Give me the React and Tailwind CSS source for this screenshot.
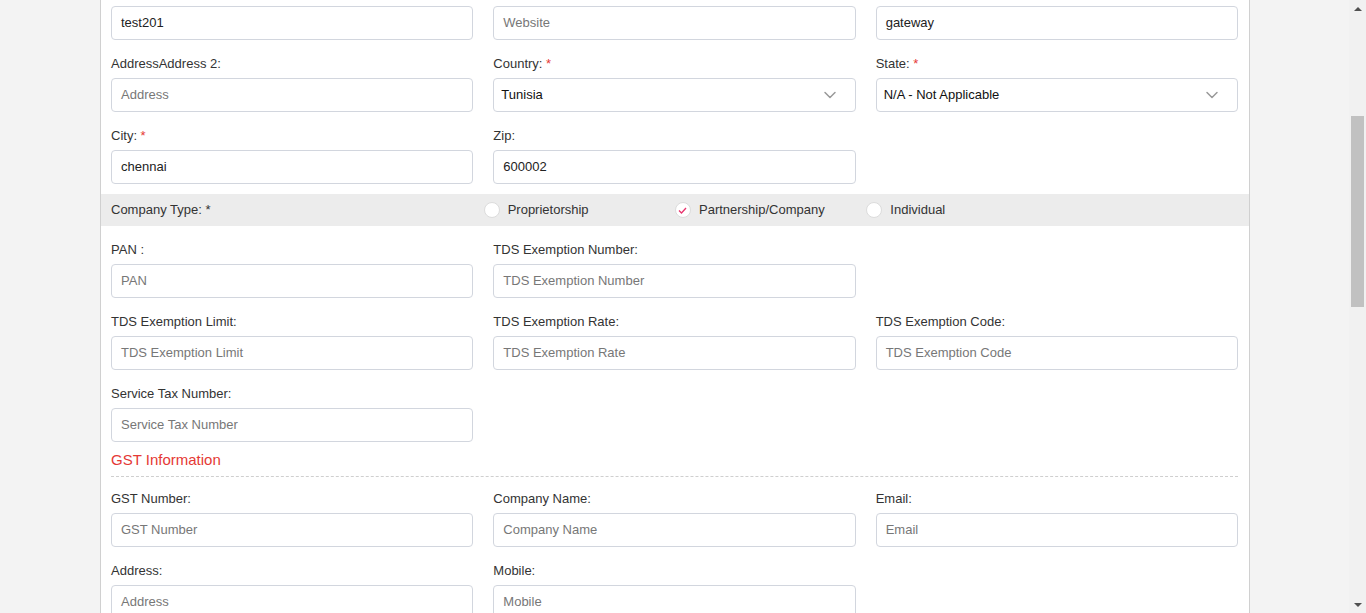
import { ChevronDown } from "lucide-react";

function Label({ text, required }) {
    return (
        <div className="h-5 leading-5 mt-px mb-1 text-[13px] text-[#333]">
            {text}
            {required && <span className="text-[#e53935]"> *</span>}
        </div>
    );
}

function Input({ value, placeholder }) {
    return (
        <div className="h-[34px] border border-[#d2d6de] rounded-[4px] bg-white px-[9px] flex items-center text-[13px]">
            {value ? (
                <span className="text-[#222]">{value}</span>
            ) : (
                <span className="text-[#777]">{placeholder}</span>
            )}
        </div>
    );
}

function Select({ value }) {
    return (
        <div className="h-[34px] border border-[#d2d6de] rounded-[4px] bg-white pl-[7px] pr-[15px] flex items-center justify-between text-[13px]">
            <span className="text-[#111]">{value}</span>
            <ChevronDown size={20} strokeWidth={1.8} className="text-[#999]" />
        </div>
    );
}

function Field({ label, required, value, placeholder, select }) {
    return (
        <div className="mb-[13px]">
            {label && <Label text={label} required={required} />}
            {select ? <Select value={value} /> : <Input value={value} placeholder={placeholder} />}
        </div>
    );
}

function Radio({ label, checked }) {
    return (
        <div className="flex items-center gap-2 text-[13px] text-[#333]">
            <span className="w-4 h-4 rounded-full bg-white border border-[#dcdcdc] flex items-center justify-center">
                {checked && (
                    <svg width="9" height="7" viewBox="0 0 9 7" fill="none">
                        <path d="M1 3.5 L3.5 6 L8 1" stroke="#e8336d" strokeWidth="1.3" />
                    </svg>
                )}
            </span>
            <span>{label}</span>
        </div>
    );
}

export default function App() {
    return (
        <div className="h-[613px] overflow-hidden flex bg-[#f3f3f3]" style={{ fontFamily: '"Liberation Sans", Arial, sans-serif' }}>
            <div className="w-[100px] shrink-0" />

            {/* Form panel */}
            <div className="w-[1150px] shrink-0 bg-white border-x border-[#d0d0d0]">
                <div className="pl-[10px] pr-[11px] pt-[6px] pb-[10px] grid grid-cols-3 gap-x-5">
                    <Field value="test201" />
                    <Field placeholder="Website" />
                    <Field value="gateway" />

                    <Field label="AddressAddress 2:" placeholder="Address" />
                    <Field label="Country:" required select value="Tunisia" />
                    <Field label="State:" required select value="N/A - Not Applicable" />

                    <div className="-mb-[13px]">
                        <Field label="City:" required value="chennai" />
                    </div>
                    <div className="-mb-[13px]">
                        <Field label="Zip:" value="600002" />
                    </div>
                </div>

                {/* Company type strip */}
                <div className="h-8 bg-[#ececec] grid grid-cols-6 items-center">
                    <div className="col-span-2 pl-[10px] text-[13px] text-[#333]">
                        Company Type: <span>*</span>
                    </div>
                    <Radio label="Proprietorship" />
                    <Radio label="Partnership/Company" checked />
                    <Radio label="Individual" />
                </div>

                <div className="pl-[10px] pr-[11px] pt-[13px] grid grid-cols-3 gap-x-5">
                    <Field label="PAN :" placeholder="PAN" />
                    <Field label="TDS Exemption Number:" placeholder="TDS Exemption Number" />
                    <div />

                    <Field label="TDS Exemption Limit:" placeholder="TDS Exemption Limit" />
                    <Field label="TDS Exemption Rate:" placeholder="TDS Exemption Rate" />
                    <Field label="TDS Exemption Code:" placeholder="TDS Exemption Code" />

                    <div className="-mb-[5px]">
                        <Field label="Service Tax Number:" placeholder="Service Tax Number" />
                    </div>
                </div>

                {/* GST section */}
                <div className="pl-[10px] pr-[11px]">
                    <div className="h-5 leading-5 text-[15px] text-[#e53935]">GST Information</div>
                    <div className="mt-[6px] border-t border-dashed border-[#cfcfcf]" />
                </div>

                <div className="pl-[10px] pr-[11px] pt-[11px] grid grid-cols-3 gap-x-5">
                    <Field label="GST Number:" placeholder="GST Number" />
                    <Field label="Company Name:" placeholder="Company Name" />
                    <Field label="Email:" placeholder="Email" />

                    <Field label="Address:" placeholder="Address" />
                    <Field label="Mobile:" placeholder="Mobile" />
                </div>
            </div>

            <div className="flex-1" />

            {/* Scrollbar */}
            <div className="w-[17px] shrink-0 bg-[#f1f1f1] flex flex-col items-center">
                <div className="h-[17px] flex items-center justify-center">
                    <span className="w-0 h-0 border-x-[4px] border-x-transparent border-b-[4px] border-b-[#505050]" />
                </div>
                <div className="flex-1 w-full px-[2px]">
                    <div className="mt-[99px] h-[191px] bg-[#c1c1c1]" />
                </div>
                <div className="h-[17px] flex items-center justify-center">
                    <span className="w-0 h-0 border-x-[4px] border-x-transparent border-t-[4px] border-t-[#505050]" />
                </div>
            </div>
        </div>
    );
}
